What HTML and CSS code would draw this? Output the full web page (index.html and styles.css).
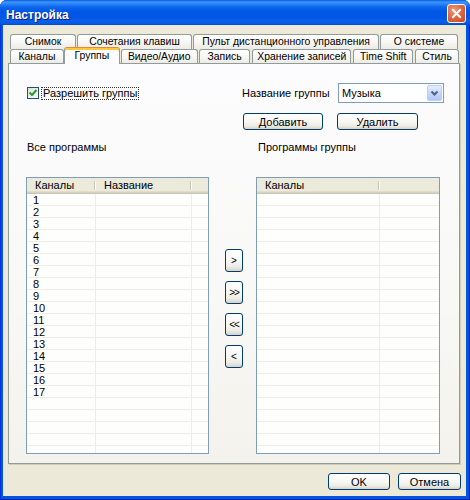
FILE: index.html
```html
<!DOCTYPE html>
<html lang="ru">
<head>
<meta charset="utf-8">
<title>Настройка</title>
<link rel="stylesheet" href="styles.css">
</head>
<body>
<div class="window">
  <div class="titlebar">
    <span class="title">Настройка</span>
    <span class="close"><svg width="17" height="17" viewBox="0 0 17 17"><path d="M5 5 L12 12 M12 5 L5 12" stroke="#fff" stroke-width="2" stroke-linecap="square"/></svg></span>
  </div>
  <div class="client">
    <div class="tabs">
      <div class="tabrow back">
        <div class="tab w-snap">Снимок</div>
        <div class="tab w-keys">Сочетания клавиш</div>
        <div class="tab w-remote">Пульт дистанционного управления</div>
        <div class="tab w-about">О системе</div>
      </div>
      <div class="tabrow front">
        <div class="tab w-chan">Каналы</div>
        <div class="tab active w-groups">Группы</div>
        <div class="tab w-video">Видео/Аудио</div>
        <div class="tab w-rec">Запись</div>
        <div class="tab w-store">Хранение записей</div>
        <div class="tab w-ts">Time Shift</div>
        <div class="tab w-style">Стиль</div>
      </div>
    </div>
    <div class="panel">
      <div class="toprow">
        <div class="check-label">
          <span class="checkbox"><svg width="10" height="10" viewBox="0 0 10 10"><path d="M1.5 4.5 L4 7 L8.5 2" stroke="#21A121" stroke-width="2" fill="none"/></svg></span>
          <span class="focus-text">Разрешить группы</span>
        </div>
        <div class="group-name">
          <span class="gn-label">Название группы</span>
          <div class="combo">
            <span class="combo-val">Музыка</span>
            <span class="combo-btn"><svg width="13" height="16" viewBox="0 0 13 16"><path d="M3.5 6.5 L6.5 9.5 L9.5 6.5" stroke="#4D6185" stroke-width="2" fill="none"/></svg></span>
          </div>
        </div>
      </div>
      <div class="btnrow">
        <button class="btn w-add">Добавить</button>
        <button class="btn w-del">Удалить</button>
      </div>
      <div class="labels">
        <span class="lab-all">Все программы</span>
        <span>Программы группы</span>
      </div>
      <div class="lists">
        <div class="list list-left">
          <div class="lhead">
            <span class="hc c1">Каналы</span>
            <span class="hc c2">Название</span>
            <span class="hc c3"></span>
          </div>
          <div class="row"><span class="cell c1">1</span><span class="cell c2"></span><span class="cell c3"></span></div>
          <div class="row"><span class="cell c1">2</span><span class="cell c2"></span><span class="cell c3"></span></div>
          <div class="row"><span class="cell c1">3</span><span class="cell c2"></span><span class="cell c3"></span></div>
          <div class="row"><span class="cell c1">4</span><span class="cell c2"></span><span class="cell c3"></span></div>
          <div class="row"><span class="cell c1">5</span><span class="cell c2"></span><span class="cell c3"></span></div>
          <div class="row"><span class="cell c1">6</span><span class="cell c2"></span><span class="cell c3"></span></div>
          <div class="row"><span class="cell c1">7</span><span class="cell c2"></span><span class="cell c3"></span></div>
          <div class="row"><span class="cell c1">8</span><span class="cell c2"></span><span class="cell c3"></span></div>
          <div class="row"><span class="cell c1">9</span><span class="cell c2"></span><span class="cell c3"></span></div>
          <div class="row"><span class="cell c1">10</span><span class="cell c2"></span><span class="cell c3"></span></div>
          <div class="row"><span class="cell c1">11</span><span class="cell c2"></span><span class="cell c3"></span></div>
          <div class="row"><span class="cell c1">12</span><span class="cell c2"></span><span class="cell c3"></span></div>
          <div class="row"><span class="cell c1">13</span><span class="cell c2"></span><span class="cell c3"></span></div>
          <div class="row"><span class="cell c1">14</span><span class="cell c2"></span><span class="cell c3"></span></div>
          <div class="row"><span class="cell c1">15</span><span class="cell c2"></span><span class="cell c3"></span></div>
          <div class="row"><span class="cell c1">16</span><span class="cell c2"></span><span class="cell c3"></span></div>
          <div class="row"><span class="cell c1">17</span><span class="cell c2"></span><span class="cell c3"></span></div>
          <div class="row"><span class="cell c1"></span><span class="cell c2"></span><span class="cell c3"></span></div>
          <div class="row"><span class="cell c1"></span><span class="cell c2"></span><span class="cell c3"></span></div>
          <div class="row"><span class="cell c1"></span><span class="cell c2"></span><span class="cell c3"></span></div>
          <div class="row"><span class="cell c1"></span><span class="cell c2"></span><span class="cell c3"></span></div>
          <div class="row"><span class="cell c1"></span><span class="cell c2"></span><span class="cell c3"></span></div>
        </div>
        <div class="movers">
          <button class="mv">&gt;</button>
          <button class="mv dbl">&gt;&gt;</button>
          <button class="mv dbl">&lt;&lt;</button>
          <button class="mv">&lt;</button>
        </div>
        <div class="list list-right">
          <div class="lhead">
            <span class="hc r1">Каналы</span>
            <span class="hc r2"></span>
          </div>
          <div class="row"><span class="cell r1"></span><span class="cell r2"></span></div>
          <div class="row"><span class="cell r1"></span><span class="cell r2"></span></div>
          <div class="row"><span class="cell r1"></span><span class="cell r2"></span></div>
          <div class="row"><span class="cell r1"></span><span class="cell r2"></span></div>
          <div class="row"><span class="cell r1"></span><span class="cell r2"></span></div>
          <div class="row"><span class="cell r1"></span><span class="cell r2"></span></div>
          <div class="row"><span class="cell r1"></span><span class="cell r2"></span></div>
          <div class="row"><span class="cell r1"></span><span class="cell r2"></span></div>
          <div class="row"><span class="cell r1"></span><span class="cell r2"></span></div>
          <div class="row"><span class="cell r1"></span><span class="cell r2"></span></div>
          <div class="row"><span class="cell r1"></span><span class="cell r2"></span></div>
          <div class="row"><span class="cell r1"></span><span class="cell r2"></span></div>
          <div class="row"><span class="cell r1"></span><span class="cell r2"></span></div>
          <div class="row"><span class="cell r1"></span><span class="cell r2"></span></div>
          <div class="row"><span class="cell r1"></span><span class="cell r2"></span></div>
          <div class="row"><span class="cell r1"></span><span class="cell r2"></span></div>
          <div class="row"><span class="cell r1"></span><span class="cell r2"></span></div>
          <div class="row"><span class="cell r1"></span><span class="cell r2"></span></div>
          <div class="row"><span class="cell r1"></span><span class="cell r2"></span></div>
          <div class="row"><span class="cell r1"></span><span class="cell r2"></span></div>
          <div class="row"><span class="cell r1"></span><span class="cell r2"></span></div>
          <div class="row"><span class="cell r1"></span><span class="cell r2"></span></div>
        </div>
      </div>
    </div>
    <div class="footer">
      <button class="btn w-ok">OK</button>
      <button class="btn w-cancel">Отмена</button>
    </div>
  </div>
</div>
</body>
</html>
```
FILE: styles.css
```css
* { box-sizing: border-box; }
html, body { margin: 0; padding: 0; background: #ffffff; }
body {
  font-family: "Liberation Sans", Arial, sans-serif;
  font-size: 11px;
  color: #000;
}

.window {
  width: 470px;
  height: 500px;
  display: flex;
  flex-direction: column;
  background: #0055E5;
  border-radius: 7px 7px 0 0;
  overflow: hidden;
  box-shadow: inset 1px 0 #0831D9, inset -1px 0 #001EA0, inset 0 -1px #001EA0;
}

.titlebar {
  flex: none;
  height: 25px;
  display: flex;
  justify-content: space-between;
  align-items: flex-start;
  padding: 0 4px 0 6px;
  background: linear-gradient(to bottom,
    #0A5BD8 0px, #3D95FF 2px, #2A83F8 4px, #0E66EC 7px,
    #0058E6 11px, #0055E5 17px, #0A5FEC 21px, #0357E0 24px, #0046C8 25px);
}
.title {
  margin-top: 8px;
  color: #fff;
  font-weight: bold;
  font-size: 12px;
  line-height: 14px;
  text-shadow: 1px 1px #0F1F8A;
}
.close {
  margin-top: 4px;
  width: 19px;
  height: 19px;
  border: 1px solid #fff;
  border-radius: 3px;
  background: radial-gradient(circle at 35% 30%, #EE9A7D 0%, #DE6A44 45%, #C9461E 100%);
  display: flex;
  align-items: center;
  justify-content: center;
}

.client {
  flex: 1;
  margin: 0 4px 4px 3px;
  background: #ECE9D8;
  padding: 9px 6px 0 5px;
  display: flex;
  flex-direction: column;
}

.tabs {
  margin-left: 2px;
  display: flex;
  flex-direction: column;
}
.tabrow { display: flex; }
.tabrow.back { height: 15px; }
.tabrow.front { height: 14px; }
.tab {
  height: 100%;
  margin-right: 1px;
  border: 1px solid #919B9C;
  border-bottom: none;
  border-radius: 3px 3px 0 0;
  background: linear-gradient(to bottom, #FFFFFF 0%, #F7F7F4 50%, #ECEBE5 100%);
  text-align: center;
  font-size: 10.4px;
  line-height: 13px;
  white-space: nowrap;
  overflow: hidden;
}
.tab.active {
  position: relative;
  z-index: 1;
  height: 17px;
  margin-top: -2px;
  border-top: 1px solid #E68B2C;
  background: #FCFCFE;
  box-shadow: inset 0 2px #FFC73C;
  line-height: 16px;
}
.w-snap { width: 66px; }
.w-keys { width: 115px; }
.w-remote { width: 186px; }
.w-about { width: 78px; }
.w-chan { width: 54px; margin-right: 0; }
.w-groups { width: 56px; }
.w-video { width: 77px; }
.w-rec { width: 52px; margin-right: 2px; }
.w-store { width: 99px; margin-right: 2px; }
.w-ts { width: 60px; margin-right: 2px; }
.w-style { width: 44px; }

.panel {
  width: 452px;
  height: 401px;
  border: 1px solid #919B9C;
  background: linear-gradient(to bottom, #FCFCFE 0%, #F8F8F5 60%, #F3F2EC 100%);
  box-shadow: 1px 1px 0 #D0CDBE;
  padding: 19px 15px 9px 17px;
  display: flex;
  flex-direction: column;
}

.toprow {
  height: 20px;
  display: flex;
  align-items: center;
}
.check-label {
  display: flex;
  align-items: center;
  margin-left: 1px;
}
.checkbox {
  width: 12px;
  height: 12px;
  border: 1px solid #1C5180;
  background: linear-gradient(135deg, #DCDCD7 0%, #F5F5F2 60%, #FFFFFF 100%);
  display: flex;
  align-items: center;
  justify-content: center;
}
.focus-text {
  margin-left: 2px;
  border: 1px dotted #333;
  padding: 0 1px;
  line-height: 11px;
}
.group-name {
  margin-left: auto;
  display: flex;
  align-items: center;
}
.gn-label { width: 96px; }
.combo {
  width: 106px;
  height: 20px;
  border: 1px solid #7F9DB9;
  background: #fff;
  display: flex;
  align-items: center;
  padding: 1px 1px 1px 3px;
}
.combo-val { flex: 1; }
.combo-btn {
  width: 15px;
  height: 16px;
  border: 1px solid #B9CEFB;
  border-radius: 2px;
  background: linear-gradient(to bottom, #E6EEFC 0%, #C8D8FA 50%, #B2C7F5 100%);
  display: flex;
  align-items: center;
  justify-content: center;
}

.btn {
  height: 17px;
  border: 1px solid #003C74;
  border-radius: 3px;
  background: linear-gradient(to bottom, #FFFFFF 0%, #F6F6F2 55%, #ECEBE4 80%, #D8D2C6 100%);
  font-family: "Liberation Sans", Arial, sans-serif;
  font-size: 11px;
  color: #000;
  padding: 0;
  line-height: 14px;
}
.btnrow {
  margin-top: 10px;
  padding-left: 217px;
  display: flex;
  gap: 14px;
}
.w-add { width: 80px; }
.w-del { width: 81px; }

.labels {
  margin-top: 11px;
  height: 13px;
  line-height: 13px;
  display: flex;
}
.lab-all { width: 232px; padding-left: 1px; }

.lists {
  margin-top: 23px;
  height: 277px;
  display: flex;
}
.list {
  border: 1px solid #7F9DB9;
  background: #FEFEFD;
  overflow: hidden;
  display: flex;
  flex-direction: column;
}
.list-left { width: 183px; }
.list-right { width: 184px; }

.lhead {
  flex: none;
  height: 16px;
  display: flex;
  background: #EBEADB;
  box-shadow: inset 0 -1px #CBC7B8, inset 0 -2px #D6D2C2, inset 0 -3px #E2DECD;
}
.hc {
  height: 16px;
  line-height: 14px;
  padding-left: 8px;
  background: linear-gradient(#C7C5B2, #C7C5B2) right 1px top 3px / 1px 9px no-repeat,
              linear-gradient(#FFFFFF, #FFFFFF) right 0 top 3px / 1px 9px no-repeat;
}
.row {
  flex: none;
  height: 12px;
  display: flex;
  border-bottom: 1px solid #EFEDE4;
}
.cell {
  height: 11px;
  line-height: 12px;
  padding-left: 6px;
  border-right: 1px solid #EFEDE4;
}
.c1 { width: 69px; }
.c2 { width: 96px; }
.c3 { flex: 1; }
.r1 { width: 123px; }
.r2 { flex: 1; }
.hc.c3, .hc.r2 { background: none; }
.cell.c3, .cell.r2 { border-right: none; }

.movers {
  width: 47px;
  padding: 72px 0 0 16px;
  display: flex;
  flex-direction: column;
  gap: 9px;
}
.mv {
  width: 18px;
  height: 23px;
  border: 1px solid #003C74;
  border-radius: 3px;
  background: linear-gradient(to bottom, #FFFFFF 0%, #F6F6F2 55%, #ECEBE4 80%, #D8D2C6 100%);
  font-family: "Liberation Sans", Arial, sans-serif;
  font-size: 10px;
  color: #000;
  padding: 0;
}
.mv.dbl { letter-spacing: -1px; }

.footer {
  margin-top: 9px;
  margin-right: -1px;
  display: flex;
  justify-content: flex-end;
  gap: 8px;
}
.w-ok { width: 62px; }
.w-cancel { width: 63px; }
```
